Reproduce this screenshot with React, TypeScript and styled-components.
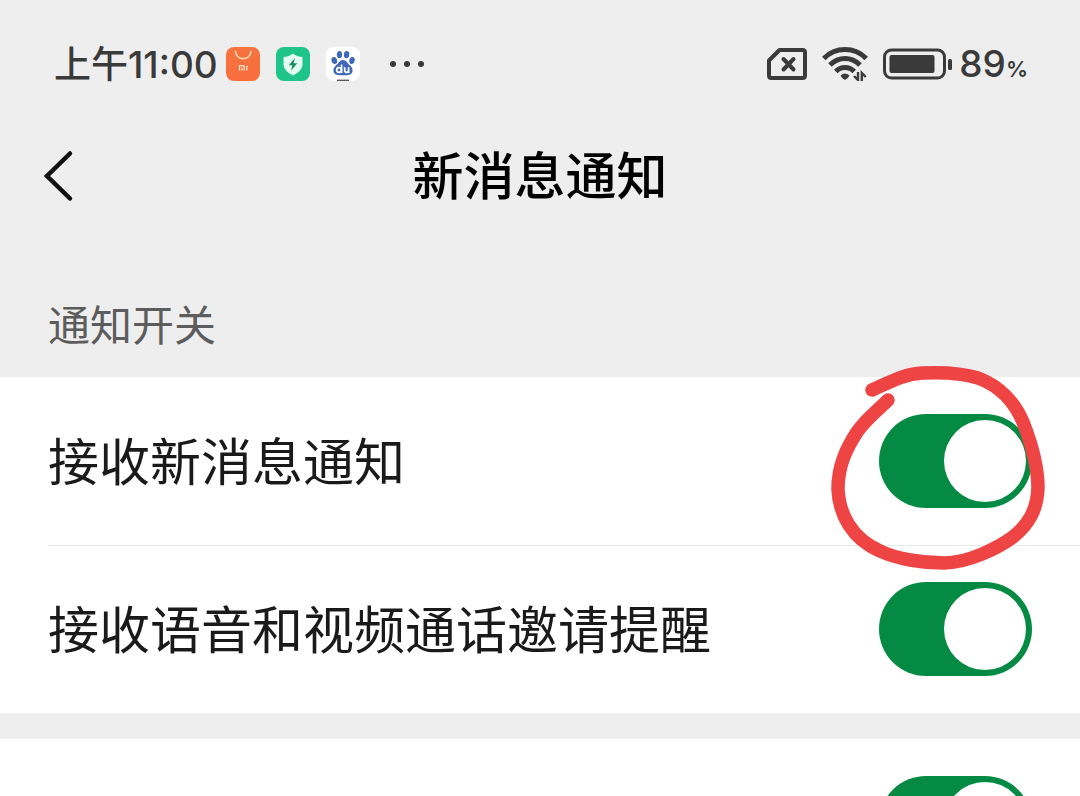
import React, { useState } from "react";
import styled, { createGlobalStyle } from "styled-components";

const GlobalStyle = createGlobalStyle`
  *, *::before, *::after { box-sizing: border-box; }
  body {
    margin: 0;
    background: #ededed;
    font-family: "Noto Sans CJK SC", sans-serif;
    color: #1a1a1a;
  }
`;

const Screen = styled.div`
  height: 100vh;
  overflow: hidden;
  background: #eeeeee;
`;

const StatusBar = styled.div`
  display: flex;
  align-items: center;
  justify-content: space-between;
  height: 128px;
  padding: 0 52px 0 54px;
  color: #3a3a3a;
`;

const StatusGroup = styled.div<{ $gap: number }>`
  display: flex;
  align-items: center;
  gap: ${(p) => p.$gap}px;
`;

const Clock = styled.time`
  display: flex;
  align-items: center;
  font-size: 37px;
  font-weight: 500;
  line-height: 40px;
`;

const ClockPeriod = styled.span`
  padding-bottom: 4px;
`;

const Digits = styled.span`
  padding-top: 2px;
  font-family: Inter, sans-serif;
  font-size: 37px;
  font-weight: 500;
  line-height: 40px;
`;

const Battery = styled.div`
  display: flex;
  align-items: baseline;
  padding-top: 4px;
  font-family: Inter, sans-serif;
  font-size: 37px;
  font-weight: 500;
  line-height: 40px;
`;

const Percent = styled.span`
  font-size: 22px;
  font-weight: 600;
`;

const Header = styled.header`
  display: grid;
  grid-template-columns: 1fr auto 1fr;
  align-items: center;
  height: 96px;
  padding: 0 40px;
`;

const BackButton = styled.button`
  display: flex;
  justify-self: start;
  padding: 0;
  border: 0;
  background: none;
  color: #111111;
  cursor: pointer;
`;

const Title = styled.h1`
  margin: 0;
  padding-bottom: 6px;
  font-size: 51px;
  font-weight: 500;
  line-height: 72px;
  color: #000000;
`;

const SectionLabel = styled.h2`
  margin: 0;
  padding: 70px 48px 26px;
  font-size: 42px;
  font-weight: 400;
  line-height: 57px;
  color: #5c5c5c;
`;

const Group = styled.section`
  margin-bottom: 26px;
  padding-left: 48px;
  background: #ffffff;
`;

const Row = styled.div`
  position: relative;
  display: flex;
  align-items: center;
  justify-content: space-between;
  height: 168px;
  padding-right: 48px;

  & + & {
    box-shadow: inset 0 1px #e9e9e9;
  }
`;

const RowLabel = styled.label`
  padding-bottom: 4px;
  font-size: 51px;
  line-height: 72px;
`;

const Switch = styled.input`
  flex: none;
  appearance: none;
  width: 153px;
  height: 94px;
  margin: 0;
  padding: 6px;
  border-radius: 47px;
  background: #dddddd;
  cursor: pointer;

  &::before {
    content: "";
    display: block;
    width: 82px;
    height: 82px;
    border-radius: 50%;
    background: #ffffff;
  }

  &:checked {
    background: #048a43;
  }

  &:checked::before {
    margin-left: auto;
  }
`;

const Marker = styled.svg`
  position: absolute;
  top: -17px;
  right: 30px;
  z-index: 1;
  pointer-events: none;
`;

function StoreIcon() {
  return (
    <svg width="34" height="34" viewBox="0 0 34 34" fill="none" aria-hidden="true">
      <defs>
        <linearGradient id="store" x1="0" y1="0" x2="0" y2="1">
          <stop offset="0" stopColor="#f4743f" />
          <stop offset="1" stopColor="#fa6d3c" />
        </linearGradient>
      </defs>
      <rect width="34" height="34" rx="8" fill="url(#store)" />
      <path d="M9.500 4.500C10.500 14 24 14 25 4.500" stroke="#ffd9b0" strokeWidth="1.600" strokeLinecap="round" />
      <path
        d="M13.500 23.500V18.700H17.200Q18.300 18.700 18.300 19.800V23.500M16 20.600V23.500M20.800 18.700V23.500"
        stroke="#ffe3cd"
        strokeWidth="1.300"
      />
    </svg>
  );
}

function SecurityIcon() {
  return (
    <svg width="34" height="34" viewBox="0 0 34 34" fill="none" aria-hidden="true">
      <rect width="34" height="34" rx="8" fill="#1fc48a" />
      <path d="M17 6.500Q21 9.800 26.500 10V18Q26 24 17 28.500Q8 24 7.500 18V10Q13 9.800 17 6.500Z" fill="#e2fff2" />
      <path d="M18.800 11L12.800 18.200H16.300L15.200 23.500L21.300 16.200H17.700Z" fill="#1c8a66" />
    </svg>
  );
}

function PawIcon() {
  return (
    <svg width="34" height="34" viewBox="0 0 34 34" fill="none" aria-hidden="true">
      <rect width="34" height="34" rx="8" fill="#ffffff" />
      <g fill="#4068b8">
        <ellipse cx="8.300" cy="13.500" rx="2.800" ry="3.500" transform="rotate(-12 8.300 13.500)" />
        <ellipse cx="13.500" cy="7.600" rx="2.700" ry="3.600" />
        <ellipse cx="20.600" cy="7.600" rx="2.700" ry="3.600" transform="rotate(8 20.600 7.600)" />
        <ellipse cx="26" cy="13.500" rx="2.700" ry="3.500" transform="rotate(12 26 13.500)" />
        <path d="M17 13C20.500 13 21.500 16.500 24.200 18.600C27.500 21.200 27.800 27.500 22.500 28C19.500 28.300 14.500 28.300 11.500 28C6.200 27.500 6.600 21.200 9.800 18.600C12.500 16.500 13.500 13 17 13Z" />
      </g>
      <g stroke="#ffffff" strokeWidth="1.700">
        <circle cx="13" cy="23" r="2.300" />
        <path d="M15.600 17.500V26M18.700 20.300V23.500Q18.700 25.300 20.600 25.300Q22.600 25.300 22.600 23.500M22.600 20.300V26" />
      </g>
      <path d="M11 33.300H23" stroke="#55585e" strokeWidth="1.400" />
    </svg>
  );
}

function MoreDots() {
  return (
    <svg width="38" height="8" viewBox="0 0 38 8" fill="currentColor" aria-hidden="true">
      <circle cx="5" cy="4" r="3" />
      <circle cx="19" cy="4" r="3" />
      <circle cx="33" cy="4" r="3" />
    </svg>
  );
}

function NoSimIcon() {
  return (
    <svg width="40" height="32" viewBox="0 0 40 32" fill="none" stroke="currentColor" aria-hidden="true">
      <path d="M12.500 2H35.500Q38 2 38 4.500V27.500Q38 30 35.500 30H4.500Q2 30 2 27.500V12.500Z" strokeWidth="4" strokeLinejoin="round" />
      <path d="M16.500 11L26.500 21.500M26.500 11L16.500 21.500" strokeWidth="4" strokeLinecap="round" />
    </svg>
  );
}

function WifiIcon() {
  return (
    <svg width="46" height="34" viewBox="0 0 46 34" fill="none" stroke="currentColor" aria-hidden="true">
      <g strokeWidth="5">
        <path d="M1.800 11.500Q10.500 2.600 23 2.600T44.200 11.500" />
        <path d="M8 18Q14.500 11.600 23 11.600T38 18" />
        <path d="M13.800 24.500Q17.500 20.600 23 20.600T32.200 24.500" />
      </g>
      <path d="M18.500 28.500Q23 24.500 27.500 28.500Q26 32 23 33Q20 32 18.500 28.500Z" fill="currentColor" stroke="none" />
      <path d="M36 25V33L32 29M39.800 34V26L43.800 30" strokeWidth="2.400" />
    </svg>
  );
}

function BatteryIcon() {
  return (
    <svg width="70" height="32" viewBox="0 0 70 32" fill="none" aria-hidden="true">
      <rect x="1.500" y="2" width="60" height="28" rx="7" stroke="currentColor" strokeWidth="3" />
      <rect x="6.500" y="7" width="45" height="18" rx="2" fill="currentColor" />
      <rect x="65" y="11" width="4" height="11" rx="1.500" fill="currentColor" />
    </svg>
  );
}

function ChevronLeft() {
  return (
    <svg width="36" height="56" viewBox="0 0 36 56" fill="none" aria-hidden="true">
      <path d="M30 5.500L7 28L30 50.500" stroke="currentColor" strokeWidth="4.500" strokeLinecap="round" />
    </svg>
  );
}

function HandDrawnCircle() {
  return (
    <Marker width="230" height="220" viewBox="820 360 230 220" fill="none" aria-hidden="true">
      <path
        d="M872 390C890 382 904 374 922 373C944 372 962 373 978 378C1000 386 1015 403 1023 422C1032 445 1038 466 1038 488C1037 510 1029 524 1013 537C998 548 968 563 944 563C922 563 897 559 880 551C852 539 839 514 838 489C838 466 846 449 857 432C866 419 877 411 888 400"
        stroke="#ef4444"
        strokeWidth="13.500"
        strokeLinecap="round"
        strokeLinejoin="round"
      />
    </Marker>
  );
}

function SettingSwitch({ id, label }: { id: string; label?: string }) {
  const [on, setOn] = useState(true);
  return (
    <Switch
      id={id}
      type="checkbox"
      role="switch"
      aria-label={label}
      checked={on}
      onChange={(e) => setOn(e.target.checked)}
    />
  );
}

export default function App() {
  return (
    <Screen>
      <GlobalStyle />
      <StatusBar>
        <StatusGroup $gap={28}>
          <StatusGroup $gap={8}>
            <Clock>
              <ClockPeriod>上午</ClockPeriod>
              <Digits>11:00</Digits>
            </Clock>
            <StatusGroup $gap={16}>
              <StoreIcon />
              <SecurityIcon />
              <PawIcon />
            </StatusGroup>
          </StatusGroup>
          <MoreDots />
        </StatusGroup>
        <StatusGroup $gap={15}>
          <NoSimIcon />
          <WifiIcon />
          <StatusGroup $gap={6}>
            <BatteryIcon />
            <Battery>
              89<Percent>%</Percent>
            </Battery>
          </StatusGroup>
        </StatusGroup>
      </StatusBar>
      <Header>
        <BackButton type="button" aria-label="返回">
          <ChevronLeft />
        </BackButton>
        <Title>新消息通知</Title>
      </Header>
      <main>
        <SectionLabel>通知开关</SectionLabel>
        <Group>
          <Row>
            <RowLabel htmlFor="messages">接收新消息通知</RowLabel>
            <SettingSwitch id="messages" />
            <HandDrawnCircle />
          </Row>
          <Row>
            <RowLabel htmlFor="calls">接收语音和视频通话邀请提醒</RowLabel>
            <SettingSwitch id="calls" />
          </Row>
        </Group>
        <Group>
          <Row>
            <span />
            <SettingSwitch id="details" label="通知显示消息详情" />
          </Row>
        </Group>
      </main>
    </Screen>
  );
}
